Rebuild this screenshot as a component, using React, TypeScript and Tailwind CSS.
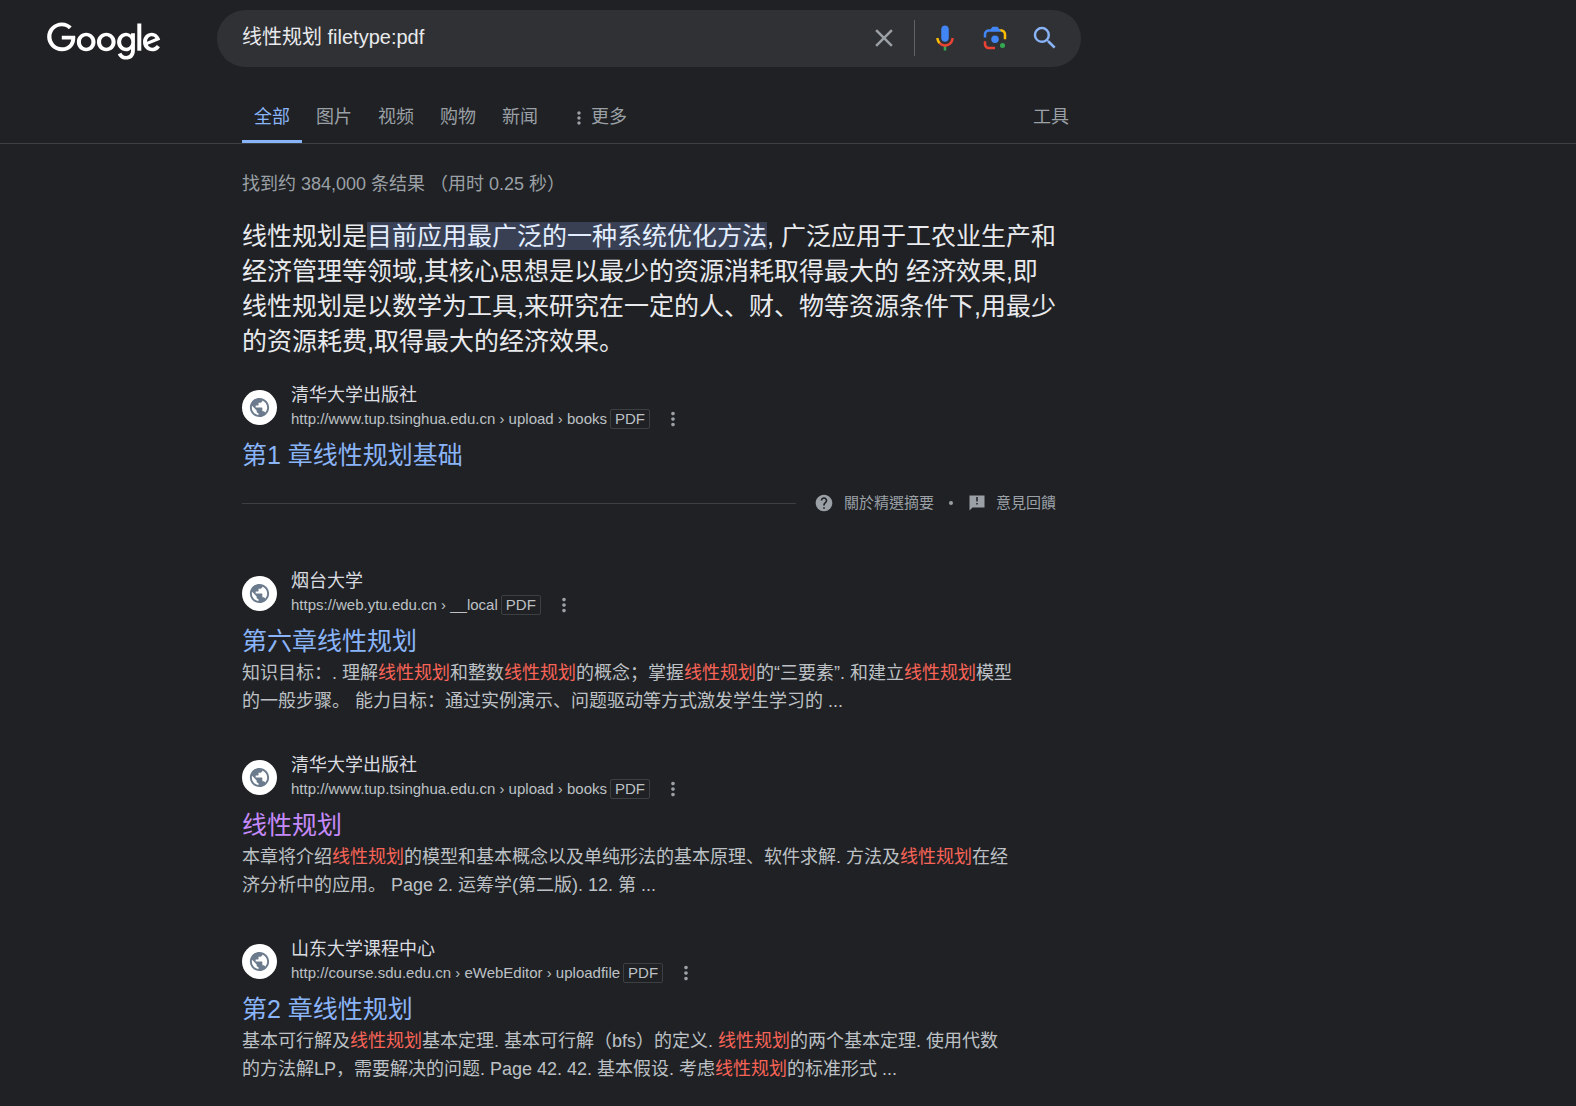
import type { ReactNode } from "react";

function GoogleLogo() {
  return (
    <svg viewBox="0 0 272 92" className="h-[39px] w-[114px]" fill="#fff" aria-hidden="true">
      <path d="M115.75 47.18c0 12.77-9.99 22.18-22.25 22.18s-22.25-9.41-22.25-22.18C71.25 34.32 81.24 25 93.5 25s22.25 9.32 22.25 22.18zm-9.74 0c0-7.98-5.79-13.44-12.51-13.44S80.99 39.2 80.99 47.18c0 7.9 5.79 13.44 12.51 13.44s12.51-5.55 12.51-13.44z" />
      <path d="M163.75 47.18c0 12.77-9.99 22.18-22.25 22.18s-22.25-9.41-22.25-22.18c0-12.85 9.99-22.18 22.25-22.18s22.25 9.32 22.25 22.18zm-9.74 0c0-7.98-5.79-13.44-12.51-13.44s-12.51 5.46-12.51 13.44c0 7.9 5.79 13.44 12.51 13.44s12.51-5.55 12.51-13.44z" />
      <path d="M209.75 26.34v39.82c0 16.38-9.66 23.07-21.08 23.07-10.75 0-17.22-7.19-19.66-13.07l8.48-3.53c1.51 3.61 5.21 7.87 11.17 7.87 7.31 0 11.84-4.51 11.84-13v-3.19h-.34c-2.18 2.69-6.38 5.04-11.68 5.04-11.09 0-21.25-9.66-21.25-22.09 0-12.52 10.16-22.26 21.25-22.26 5.29 0 9.49 2.35 11.68 4.96h.34v-3.61h9.25zm-8.56 20.92c0-7.81-5.21-13.52-11.84-13.52-6.72 0-12.35 5.71-12.35 13.52 0 7.73 5.63 13.36 12.35 13.36 6.63 0 11.84-5.63 11.84-13.36z" />
      <path d="M225 3v65h-9.5V3h9.5z" />
      <path d="M262.02 54.48l7.56 5.04c-2.44 3.61-8.32 9.83-18.48 9.83-12.6 0-22.01-9.74-22.01-22.18 0-13.19 9.49-22.18 20.92-22.18 11.51 0 17.14 9.16 18.98 14.11l1.01 2.52-29.65 12.28c2.27 4.45 5.8 6.72 10.75 6.72 4.96 0 8.4-2.44 10.92-6.14zm-23.27-7.98l19.82-8.23c-1.09-2.77-4.37-4.7-8.23-4.7-4.95 0-11.84 4.37-11.59 12.93z" />
      <path d="M35.29 41.41V32H67c.31 1.64.47 3.58.47 5.68 0 7.06-1.93 15.79-8.15 22.01-6.05 6.3-13.78 9.66-24.02 9.66C16.32 69.35.36 53.89.36 34.91.36 15.93 16.32.47 35.3.47c10.5 0 17.98 4.12 23.6 9.49l-6.64 6.64c-4.03-3.78-9.49-6.72-16.97-6.72-13.86 0-24.7 11.17-24.7 25.03 0 13.86 10.84 25.03 24.7 25.03 8.99 0 14.11-3.61 17.39-6.89 2.66-2.66 4.41-6.46 5.1-11.65l-22.49.01z" />
    </svg>
  );
}

function ClearIcon() {
  return (
    <svg viewBox="0 0 24 24" className="size-[30px]" fill="#9aa0a6">
      <path d="M19 6.41L17.59 5 12 10.59 6.41 5 5 6.41 10.59 12 5 17.59 6.41 19 12 13.41 17.59 19 19 17.59 13.41 12z" />
    </svg>
  );
}

function MicIcon() {
  return (
    <svg viewBox="0 0 24 24" className="size-[30px]">
      <path fill="#4285f4" d="m12 15c1.66 0 3-1.31 3-2.97v-7.02c0-1.66-1.34-3.01-3-3.01s-3 1.34-3 3.01v7.02c0 1.66 1.34 2.97 3 2.97z" />
      <path fill="#34a853" d="m11 18.08h2v3.92h-2z" />
      <path fill="#fbbc04" d="m7.05 16.87c-1.27-1.33-2.05-2.83-2.05-4.87h2c0 1.45 0.56 2.42 1.47 3.38v0.32l-1.15 1.18z" />
      <path fill="#ea4335" d="m12 16.93a4.97 5.25 0 0 1 -3.54 -1.55l-1.41 1.49c1.26 1.34 3.02 2.13 4.95 2.13 3.87 0 6.99-2.92 6.99-7h-1.99c0 2.92-2.24 4.93-5 4.93z" />
    </svg>
  );
}

function LensIcon() {
  return (
    <svg viewBox="0 0 192 192" className="size-[30px]">
      <circle fill="#34a853" cx="144.07" cy="144" r="16" />
      <circle fill="#4285f4" cx="96.07" cy="104" r="24" />
      <path fill="#ea4335" d="M24,135.2c0,18.11,14.69,32.8,32.8,32.8H96v-16l-40.1-0.1c-8.8,0-15.9-8.19-15.9-17.9v-18H24V135.2z" />
      <path fill="#fbbc04" d="M168,72.8c0-18.11-14.69-32.8-32.8-32.8H116l20,16c8.8,0,16,8.29,16,18v30h16V72.8z" />
      <path fill="#4285f4" d="M112,24l-32,0L68,40H56.8C38.69,40,24,54.69,24,72.8V92h16V74c0-9.71,7.2-18,16-18h80L112,24z" />
    </svg>
  );
}

function SearchIcon() {
  return (
    <svg viewBox="0 0 24 24" className="size-[30px]" fill="#8ab4f8">
      <path d="M15.5 14h-.79l-.28-.27A6.471 6.471 0 0 0 16 9.5 6.5 6.5 0 1 0 9.5 16c1.61 0 3.09-.59 4.23-1.57l.27.28v.79l5 4.99L20.49 19l-4.99-5zm-6 0C7.01 14 5 11.99 5 9.5S7.01 5 9.5 5 14 7.01 14 9.5 11.99 14 9.5 14z" />
    </svg>
  );
}

function DotsIcon({ className }: { className: string }) {
  return (
    <svg viewBox="0 0 24 24" className={className} fill="#9aa0a6">
      <path d="M12 8c1.1 0 2-.9 2-2s-.9-2-2-2-2 .9-2 2 .9 2 2 2zm0 2c-1.1 0-2 .9-2 2s.9 2 2 2 2-.9 2-2-.9-2-2-2zm0 6c-1.1 0-2 .9-2 2s.9 2 2 2 2-.9 2-2-.9-2-2-2z" />
    </svg>
  );
}

function GlobeIcon() {
  return (
    <svg viewBox="0 0 24 24" className="size-[23px]" fill="#6b7a8c">
      <path d="M12 2C6.48 2 2 6.48 2 12s4.48 10 10 10 10-4.48 10-10S17.52 2 12 2zM4 12c0-.61.08-1.21.21-1.78L8.99 15v1c0 1.1.9 2 2 2v1.93C7.06 19.43 4 16.07 4 12zm13.89 5.4c-.26-.81-1-1.4-1.9-1.4h-1v-3c0-.55-.45-1-1-1h-6v-2h2c.55 0 1-.45 1-1V7h2c1.1 0 2-.9 2-2v-.41C17.92 5.77 20 8.65 20 12c0 2.08-.81 3.98-2.11 5.4z" />
    </svg>
  );
}

function HelpIcon() {
  return (
    <svg viewBox="0 0 24 24" className="size-5" fill="#9aa0a6">
      <path d="M12 2C6.48 2 2 6.48 2 12s4.48 10 10 10 10-4.48 10-10S17.52 2 12 2zm1 17h-2v-2h2v2zm2.07-7.75l-.9.92C13.45 12.9 13 13.5 13 15h-2v-.5c0-1.1.45-2.1 1.17-2.83l1.24-1.26c.37-.36.59-.86.59-1.41 0-1.1-.9-2-2-2s-2 .9-2 2H8c0-2.21 1.79-4 4-4s4 1.79 4 4c0 .88-.36 1.68-.93 2.25z" />
    </svg>
  );
}

function FeedbackIcon() {
  return (
    <svg viewBox="0 0 24 24" className="size-[18px]" fill="#9aa0a6">
      <path d="M22 2H2v20l4-4h16V2zm-9 12h-2v-2h2v2zm0-4h-2V4h2v6z" />
    </svg>
  );
}

function Em({ children }: { children: ReactNode }) {
  return <em className="text-[#f86458] not-italic">{children}</em>;
}

type SourceProps = {
  site: string;
  url: string;
  title: string;
  visited?: boolean;
};

function Source({ site, url, title, visited }: SourceProps) {
  return (
    <div>
      <div className="flex items-center">
        <span className="flex size-[35px] shrink-0 items-center justify-center rounded-full bg-white">
          <GlobeIcon />
        </span>
        <div className="ml-3.5">
          <div className="text-lg leading-6 text-[#dadce0]">{site}</div>
          <div className="flex h-6 items-center text-[15px] text-[#bdc1c6]">
            <cite className="not-italic">{url}</cite>
            <span className="ml-[3px] rounded-xs border border-[#3c4043] px-1 leading-[18px]">PDF</span>
            <button type="button" aria-label="关于这条结果的详细信息" className="ml-3">
              <DotsIcon className="size-[22px]" />
            </button>
          </div>
        </div>
      </div>
      <h3 className="mt-2 text-[25px] leading-8">
        <a href="#" className={visited ? "text-[#c58af9]" : "text-[#8ab4f8]"}>
          {title}
        </a>
      </h3>
    </div>
  );
}

const tabs = ["全部", "图片", "视频", "购物", "新闻"];

const results: (SourceProps & { snippet: ReactNode })[] = [
  {
    site: "烟台大学",
    url: "https://web.ytu.edu.cn › __local",
    title: "第六章线性规划",
    snippet: (
      <>
        知识目标：. 理解<Em>线性规划</Em>和整数<Em>线性规划</Em>的概念；掌握<Em>线性规划</Em>的“三要素”. 和建立
        <Em>线性规划</Em>模型
        <br />
        的一般步骤。 能力目标：通过实例演示、问题驱动等方式激发学生学习的 ...
      </>
    ),
  },
  {
    site: "清华大学出版社",
    url: "http://www.tup.tsinghua.edu.cn › upload › books",
    title: "线性规划",
    visited: true,
    snippet: (
      <>
        本章将介绍<Em>线性规划</Em>的模型和基本概念以及单纯形法的基本原理、软件求解. 方法及
        <Em>线性规划</Em>在经
        <br />
        济分析中的应用。 Page 2. 运筹学(第二版). 12. 第 ...
      </>
    ),
  },
  {
    site: "山东大学课程中心",
    url: "http://course.sdu.edu.cn › eWebEditor › uploadfile",
    title: "第2 章线性规划",
    snippet: (
      <>
        基本可行解及<Em>线性规划</Em>基本定理. 基本可行解（bfs）的定义. <Em>线性规划</Em>的两个基本定理. 使用代数
        <br />
        的方法解LP，需要解决的问题. Page 42. 42. 基本假设. 考虑<Em>线性规划</Em>的标准形式 ...
      </>
    ),
  },
];

export default function App() {
  return (
    <div
      lang="zh-CN"
      className="min-h-screen bg-[#202124] font-['Liberation_Sans','Noto_Sans_CJK_SC',sans-serif] text-[#bdc1c6]"
    >
      <header className="border-b border-[#3c4043] pt-2.5">
        <div className="flex">
          <a href="#" aria-label="Google" className="mt-3 w-[217px] shrink-0 pl-[47px]">
            <GoogleLogo />
          </a>
          <form className="flex h-[57px] w-full max-w-[864px] items-center rounded-full bg-[#303134] pr-[21px] pb-px pl-[25px]">
            <input
              type="text"
              aria-label="搜索"
              defaultValue="线性规划 filetype:pdf"
              className="min-w-0 flex-1 bg-transparent pb-0.5 text-xl text-[#e8eaed] outline-none"
            />
            <button type="button" aria-label="清除">
              <ClearIcon />
            </button>
            <span className="mx-[15px] h-9 w-px bg-[#5f6368]" />
            <button type="button" aria-label="语音搜索">
              <MicIcon />
            </button>
            <button type="button" aria-label="按图搜索" className="ml-5">
              <LensIcon />
            </button>
            <button type="submit" aria-label="Google 搜索" className="ml-5">
              <SearchIcon />
            </button>
          </form>
        </div>
        <nav className="mt-7 ml-[242px] flex max-w-[839px] items-stretch text-lg leading-[45px] text-[#9aa0a6]">
          <div className="flex gap-0.5">
            {tabs.map((tab, i) => (
              <a
                key={tab}
                href="#"
                className={i === 0 ? "border-b-3 border-[#8ab4f8] px-3 text-[#8ab4f8]" : "px-3"}
              >
                {tab}
              </a>
            ))}
          </div>
          <button type="button" className="ml-[15px] flex items-center px-1 pb-[3px]">
            <DotsIcon className="size-5" />
            <span className="ml-0.5">更多</span>
          </button>
          <button type="button" className="mr-3 ml-auto pb-[3px]">
            工具
          </button>
        </nav>
      </header>

      <main className="ml-[242px] max-w-[816px]">
        <p className="pt-7 text-lg leading-6 text-[#9aa0a6]">找到约 384,000 条结果 （用时 0.25 秒）</p>

        <section className="mt-[23px]">
          <p className="text-[25px] leading-[35px] text-[#e8eaed]">
            线性规划是
            <mark className="bg-[#394054] text-[#e2eeff]">目前应用最广泛的一种系统优化方法</mark>,
            广泛应用于工农业生产和
            <br />
            经济管理等领域,其核心思想是以最少的资源消耗取得最大的 经济效果,即
            <br />
            线性规划是以数学为工具,来研究在一定的人、财、物等资源条件下,用最少
            <br />
            的资源耗费,取得最大的经济效果。
          </p>
          <div className="mt-6">
            <Source
              site="清华大学出版社"
              url="http://www.tup.tsinghua.edu.cn › upload › books"
              title="第1 章线性规划基础"
            />
          </div>
          <div
            lang="zh-TW"
            className="mt-5 flex items-center font-['Liberation_Sans','Noto_Sans_CJK_TC',sans-serif] text-[15px] leading-6 text-[#9aa0a6]"
          >
            <hr className="mr-[18px] flex-1 border-[#3c4043]" />
            <a href="#" className="flex items-center gap-2.5">
              <HelpIcon />
              關於精選摘要
            </a>
            <span className="mx-[15px] size-1 rounded-full bg-[#9aa0a6]" />
            <a href="#" className="mr-0.5 flex items-center gap-2.5">
              <FeedbackIcon />
              意見回饋
            </a>
          </div>
        </section>

        <div className="mt-[54px] flex flex-col gap-[38px] pb-6">
          {results.map((result) => (
            <article key={result.title}>
              <Source site={result.site} url={result.url} title={result.title} visited={result.visited} />
              <p className="mt-0.5 text-lg leading-7">{result.snippet}</p>
            </article>
          ))}
        </div>
      </main>
    </div>
  );
}
